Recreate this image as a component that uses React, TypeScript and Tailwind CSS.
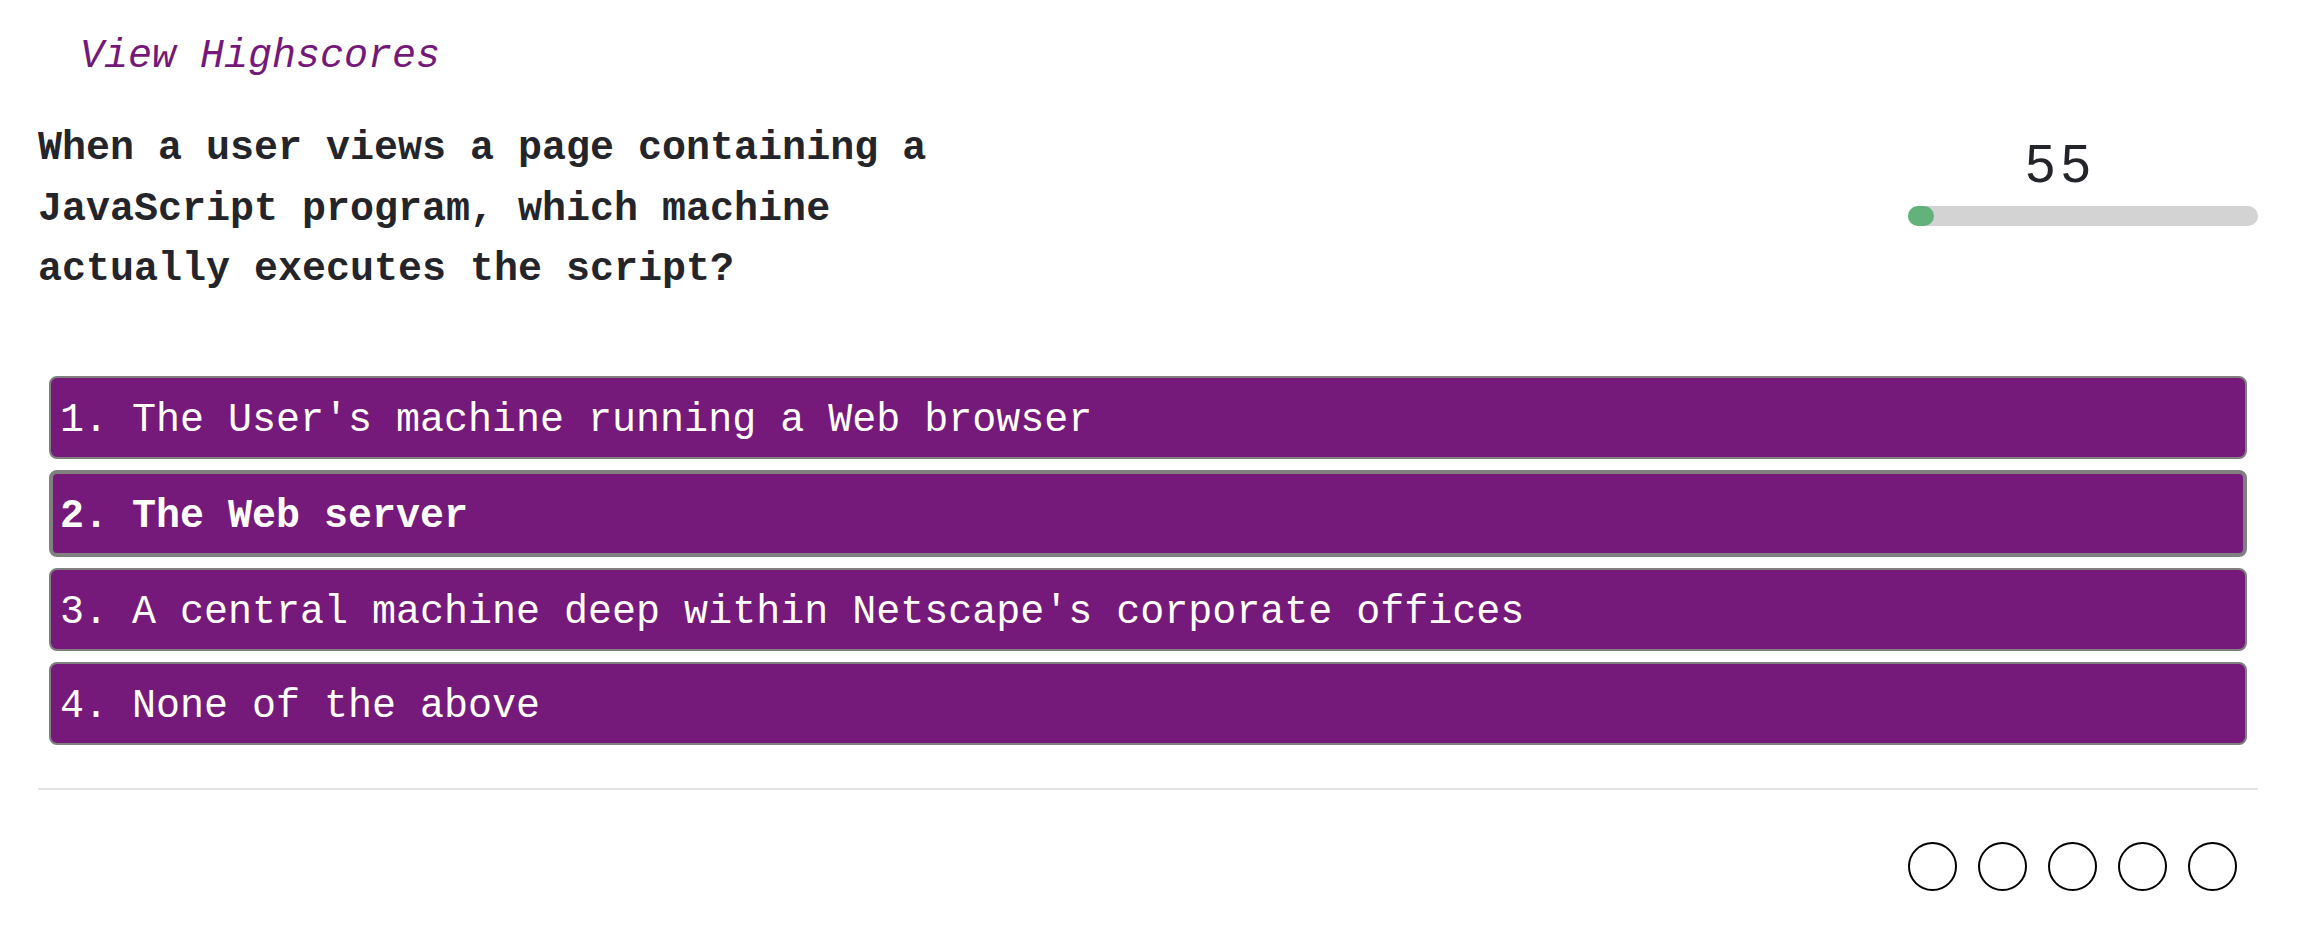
import { useState } from "react";

const answers = [
  "The User's machine running a Web browser",
  "The Web server",
  "A central machine deep within Netscape's corporate offices",
  "None of the above",
];

export default function App() {
  const [hovered, setHovered] = useState<number | null>(1);

  return (
    <div className="min-h-screen w-full bg-white pl-[38px] pr-[56px] pt-[27px] font-['Liberation_Mono','Courier_New',monospace]">
      {/* header link */}
      <div className="pl-[42px]">
        <a className="text-[40px] leading-[60px] italic text-[#74197a] cursor-pointer">View Highscores</a>
      </div>

      {/* question + timer */}
      <div className="mt-[32px] flex items-start justify-between">
        <h2 className="w-[960px] text-[40px] leading-[60.5px] font-bold text-[#24252a]">
          When a user views a page containing a JavaScript program, which machine actually executes the script?
        </h2>
        <div className="w-[350px] pt-[18px]">
          <div className="pr-[44px] text-center text-[53px] leading-none tracking-[6px] text-[#24252a] font-['Liberation_Sans',Arial,sans-serif]">
            55
          </div>
          <div className="mt-[16px] h-[20px] w-full rounded-full bg-[#d3d3d3]">
            <div className="h-full w-[26px] rounded-full bg-[#62b27a]" />
          </div>
        </div>
      </div>

      {/* answers */}
      <div className="mt-[75px] mx-[11px] flex flex-col gap-[11px]">
        {answers.map((a, i) => {
          const active = hovered === i;
          return (
            <button
              key={i}
              onMouseEnter={() => setHovered(i)}
              className={
                active
                  ? "w-full rounded-[8px] border-4 border-[#808080] bg-[#751a7a] pt-[19px] pb-[13px] pl-[7px] text-left text-[40px] leading-[47px] font-bold text-white"
                  : "w-full rounded-[8px] border-2 border-[#808080] bg-[#751a7a] pt-[19px] pb-[13px] pl-[9px] text-left text-[40px] leading-[47px] text-white"
              }
            >
              {i + 1}. {a}
            </button>
          );
        })}
      </div>

      <div className="mt-[43px] h-[2px] w-full bg-[#e3e3e3]" />

      {/* progress dots */}
      <div className="mt-[52px] flex justify-end gap-[21px] pr-[21px]">
        {[0, 1, 2, 3, 4].map((d) => (
          <div key={d} className="h-[49px] w-[49px] rounded-full border-2 border-black" />
        ))}
      </div>
    </div>
  );
}
